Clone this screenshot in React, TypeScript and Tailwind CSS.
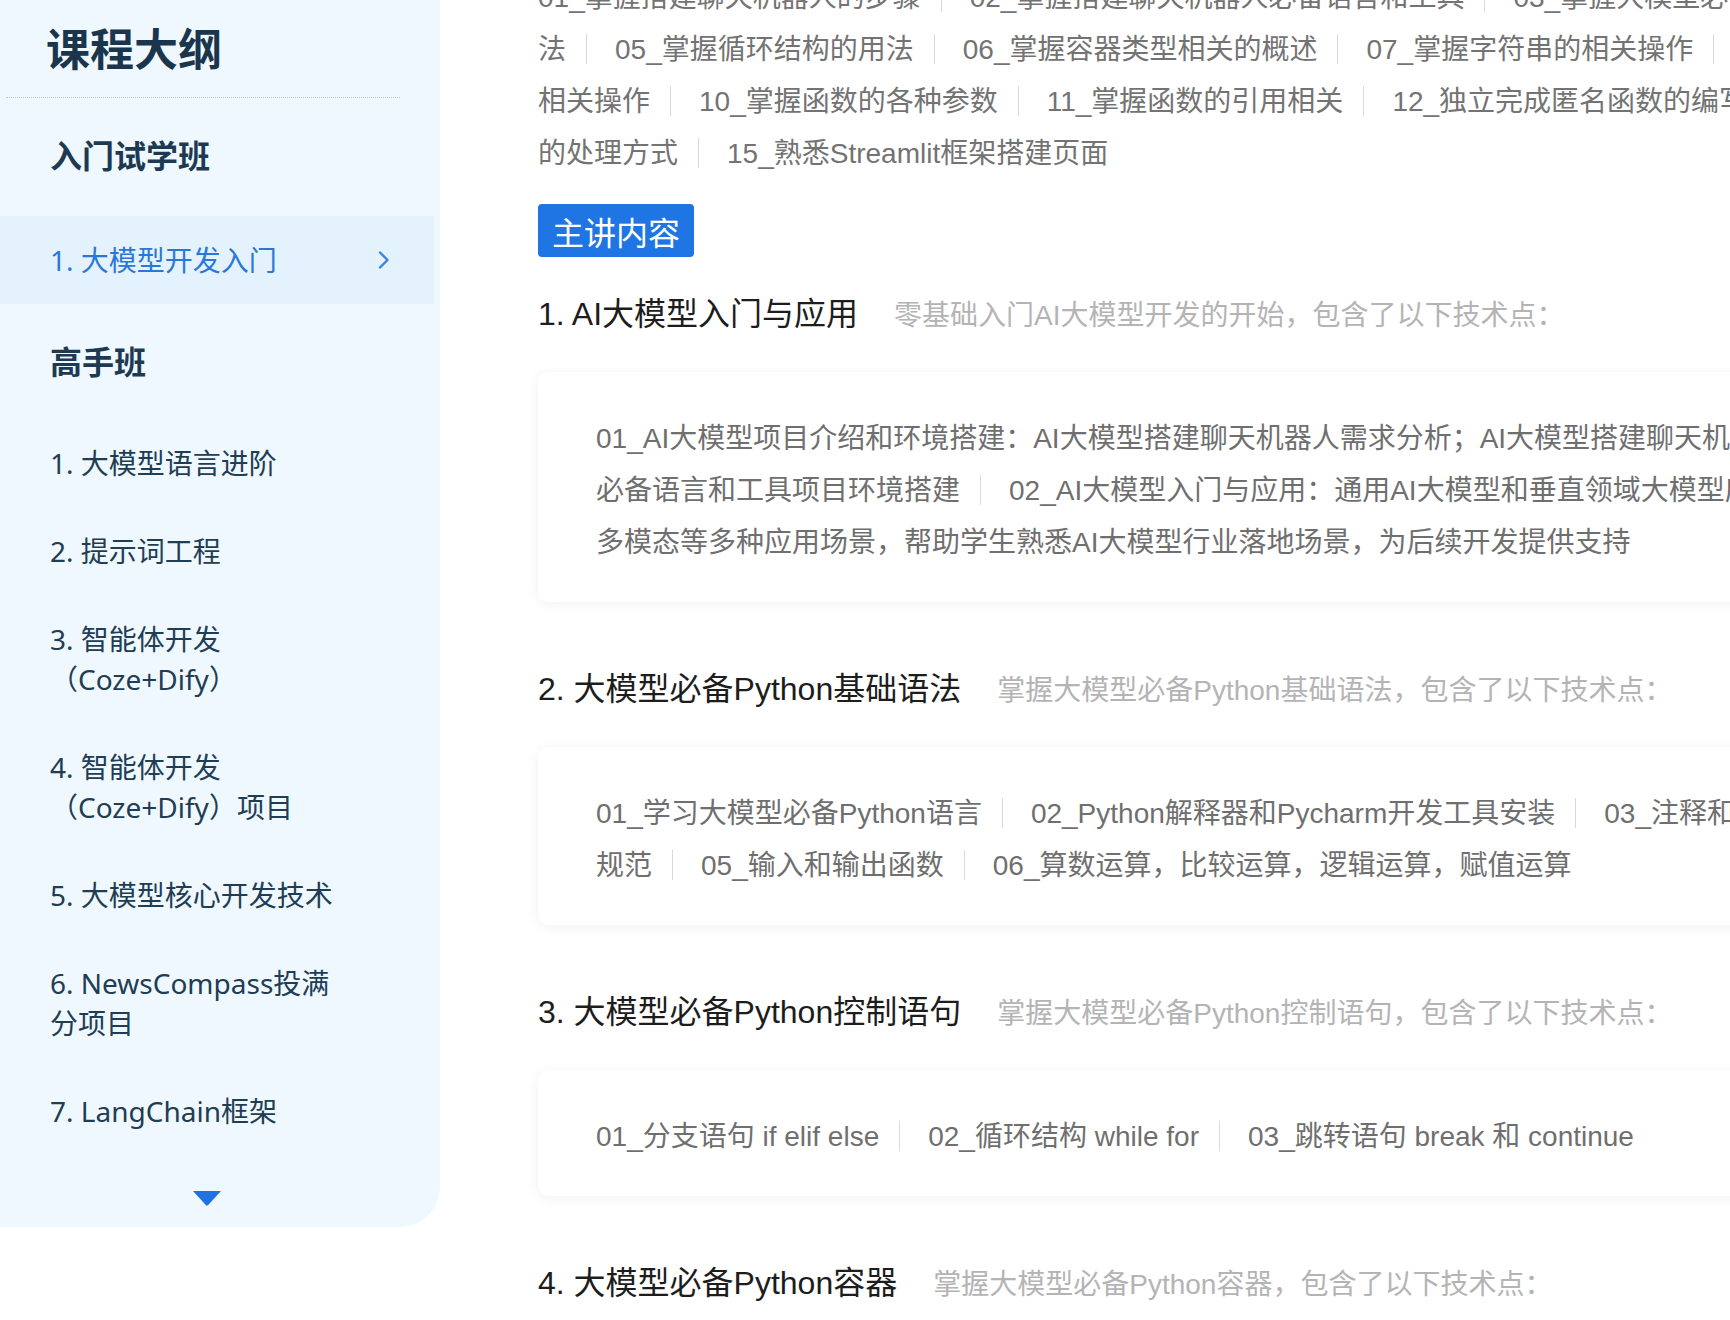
const topLines: string[][] = [
  ["01_掌握搭建聊天机器人的步骤", "02_掌握搭建聊天机器人必备语言和工具", "03_掌握大模型必备的环境搭建", "04_掌握分支语句的用"],
  ["法", "05_掌握循环结构的用法", "06_掌握容器类型相关的概述", "07_掌握字符串的相关操作", "08_掌握列表和字典的"],
  ["相关操作", "10_掌握函数的各种参数", "11_掌握函数的引用相关", "12_独立完成匿名函数的编写和使用", "13_掌握异常"],
  ["的处理方式", "15_熟悉Streamlit框架搭建页面"],
];

const sections = [
  {
    title: "1. AI大模型入门与应用",
    desc: "零基础入门AI大模型开发的开始，包含了以下技术点：",
    lines: [
      ["01_AI大模型项目介绍和环境搭建：AI大模型搭建聊天机器人需求分析；AI大模型搭建聊天机器人"],
      ["必备语言和工具项目环境搭建", "02_AI大模型入门与应用：通用AI大模型和垂直领域大模型应用，覆盖文本、图像、语音、"],
      ["多模态等多种应用场景，帮助学生熟悉AI大模型行业落地场景，为后续开发提供支持"],
    ],
  },
  {
    title: "2. 大模型必备Python基础语法",
    desc: "掌握大模型必备Python基础语法，包含了以下技术点：",
    lines: [
      ["01_学习大模型必备Python语言", "02_Python解释器和Pycharm开发工具安装", "03_注释和变量", "04_标识符和命名"],
      ["规范", "05_输入和输出函数", "06_算数运算，比较运算，逻辑运算，赋值运算"],
    ],
  },
  {
    title: "3. 大模型必备Python控制语句",
    desc: "掌握大模型必备Python控制语句，包含了以下技术点：",
    lines: [["01_分支语句 if elif else", "02_循环结构 while for", "03_跳转语句 break 和 continue"]],
  },
  {
    title: "4. 大模型必备Python容器",
    desc: "掌握大模型必备Python容器，包含了以下技术点：",
    lines: [["01_列表的定义和常用操作", "02_元组的定义和常用操作", "03_字典的定义和常用操作"]],
  },
];

const proItems = [
  "1. 大模型语言进阶",
  "2. 提示词工程",
  "3. 智能体开发（Coze+Dify）",
  "4. 智能体开发（Coze+Dify）项目",
  "5. 大模型核心开发技术",
  "6. NewsCompass投满分项目",
  "7. LangChain框架",
];

const Sep = () => (
  <span className="inline-block w-px h-[30px] bg-[#d9d9d9] align-[-5px] ml-[20px] mr-[28px]" />
);

const TextLine = ({ parts }: { parts: string[] }) => (
  <div className="h-[52px] leading-[52px] whitespace-nowrap">
    {parts.map((p, i) => (
      <span key={i}>
        {i > 0 && <Sep />}
        {p}
      </span>
    ))}
  </div>
);

const Sidebar = () => (
  <aside className="w-[440px] shrink-0 self-start bg-[#eff8ff] rounded-br-[40px] pb-[21px] font-['Noto_Sans','Noto_Sans_CJK_SC',sans-serif]">
    {/* Header */}
    <div className="h-[97px] flex items-center pl-[46px]">
      <h1 className="text-[44px] font-bold text-[#1b354c]">课程大纲</h1>
    </div>
    <div className="ml-[6px] w-[394px] border-b border-dotted border-[#a9d1e3]" />

    {/* Trial class */}
    <div className="mt-[14px] h-[88px] flex items-center pl-[50px] text-[32px] font-bold text-[#1d3a52]">
      入门试学班
    </div>
    <div className="mt-[16px] mr-[6px] h-[88px] flex items-center justify-between pl-[50px] pr-[44px] bg-[#e3f2fc]">
      <span className="text-[28px] text-[#2a77da]">1. 大模型开发入门</span>
      <svg width="12" height="20" viewBox="0 0 12 20" fill="none">
        <path d="M2 2.5 L9.5 10 L2 17.5" stroke="#3a84e0" strokeWidth="2.4" strokeLinecap="round" strokeLinejoin="round" />
      </svg>
    </div>

    {/* Pro class */}
    <div className="mt-[14px] h-[88px] flex items-center pl-[50px] text-[32px] font-bold text-[#1d3a52]">
      高手班
    </div>
    <ul className="mt-[13px]">
      {proItems.map((item) => (
        <li key={item} className="py-[24px] pl-[50px]">
          <div className="w-[295px] text-[28px] leading-[40px] text-[#213d54]">{item}</div>
        </li>
      ))}
    </ul>

    {/* More */}
    <div className="mt-[36px] pl-[193px]">
      <svg width="28" height="15" viewBox="0 0 28 15" className="block">
        <path d="M0 0 H28 L15.2 14 Q14 15 12.8 14 Z" fill="#1f72df" />
      </svg>
    </div>
  </aside>
);

export default function App() {
  return (
    <div className="flex w-[1730px] h-[1320px] overflow-hidden bg-white">
      <Sidebar />

      <main className="ml-[98px] w-[1300px] shrink-0 -mt-[28px] font-['Liberation_Sans','Noto_Sans_CJK_SC',sans-serif]">
        {/* Summary */}
        <div className="text-[28px] text-[#737373]">
          {topLines.map((parts, i) => (
            <TextLine key={i} parts={parts} />
          ))}
        </div>

        <div className="mt-[24px] inline-flex h-[53px] items-center rounded-[4px] bg-[#1f75e3] px-[14px] text-[32px] text-white font-['Noto_Sans_CJK_SC',sans-serif]">
          主讲内容
        </div>

        {/* Sections */}
        {sections.map((s, i) => (
          <section key={s.title} className={i === 0 ? "mt-[32px]" : "mt-[62px]"}>
            <div className="h-[50px] leading-[50px] whitespace-nowrap">
              <span className="text-[32px] text-[#1d1d1d]">{s.title}</span>
              <span className="ml-[36px] text-[28px] text-[#b4b4b4]">{s.desc}</span>
            </div>
            <div className="mt-[33px] rounded-[10px] bg-white pl-[58px] pt-[41px] pb-[33px] text-[28px] text-[#6f6f6f] shadow-[0_2px_14px_rgba(0,0,0,0.06)]">
              {s.lines.map((parts, j) => (
                <TextLine key={j} parts={parts} />
              ))}
            </div>
          </section>
        ))}
      </main>
    </div>
  );
}
